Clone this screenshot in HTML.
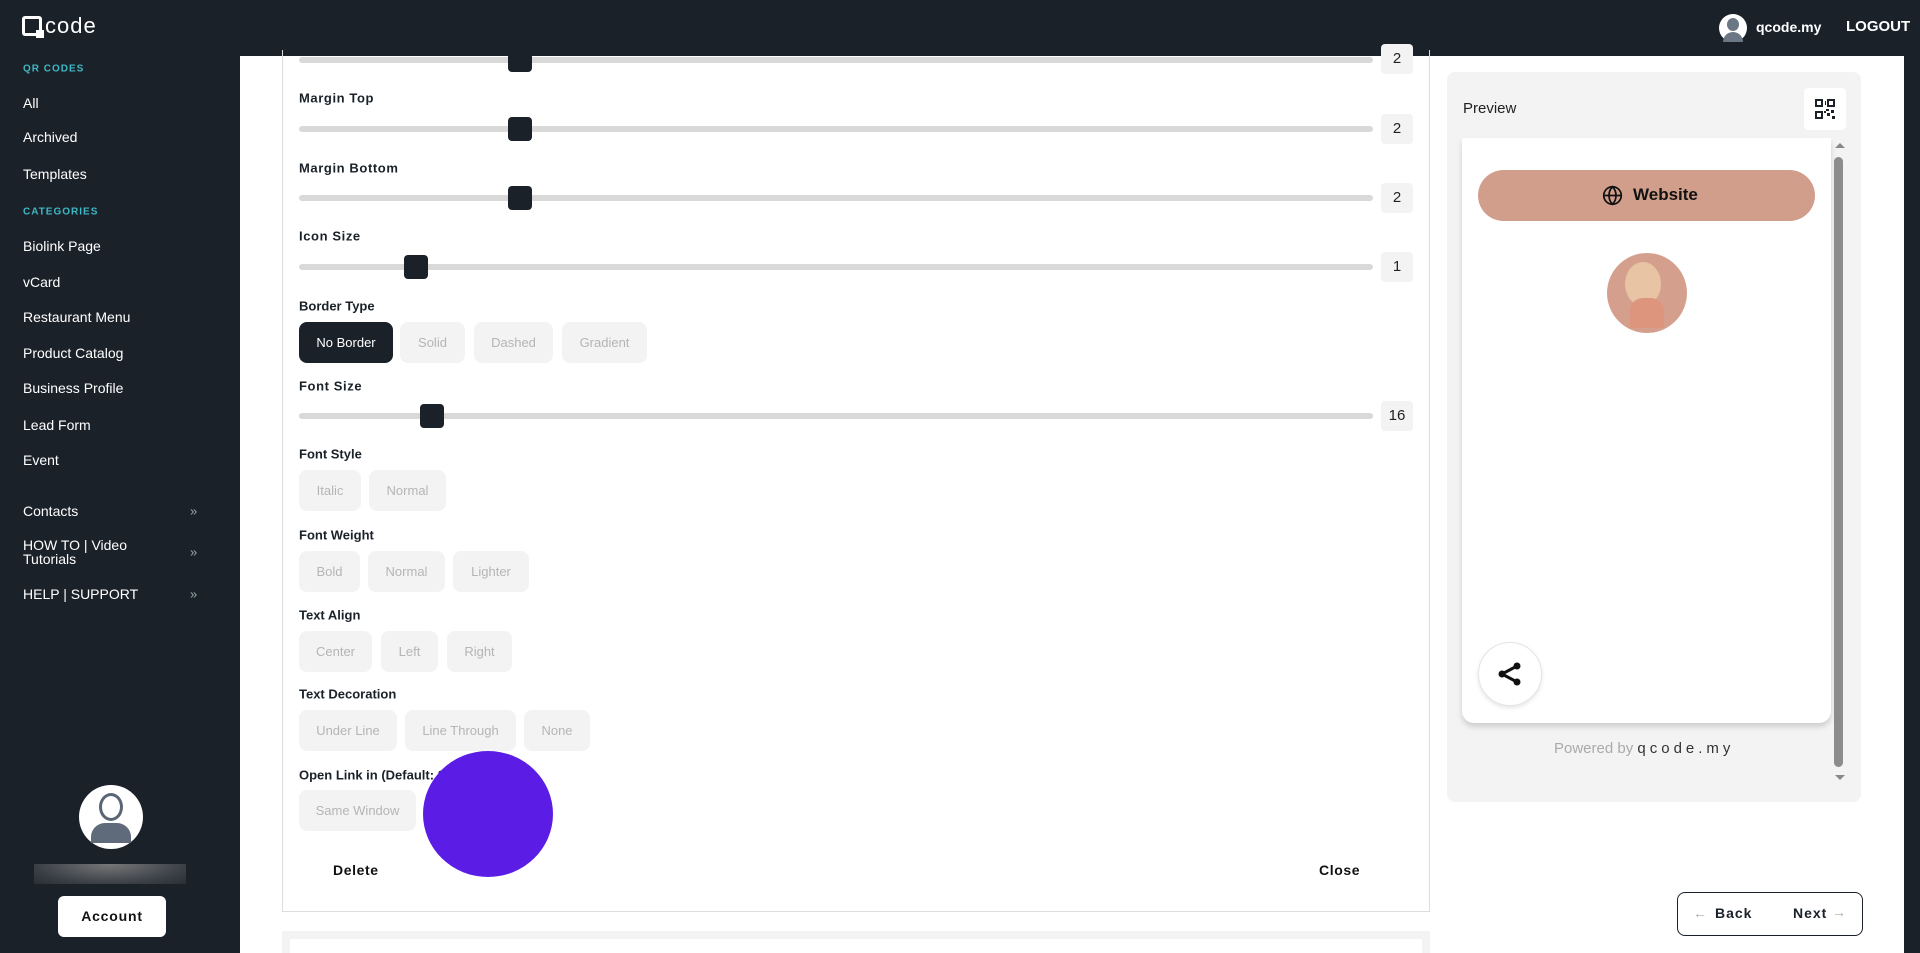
<!DOCTYPE html>
<html><head><meta charset="utf-8"><style>
*{margin:0;padding:0;box-sizing:border-box}
body{width:1920px;height:953px;overflow:hidden;background:#fff;font-family:"Liberation Sans",sans-serif;position:relative}
.a{position:absolute}
#hdr{left:0;top:0;width:1920px;height:56px;background:#1b2129}
#side{left:0;top:56px;width:240px;height:897px;background:#1b2129}
#rs{left:1904px;top:56px;width:16px;height:897px;background:#1b2129}
.nav{position:absolute;left:23px;color:#fff;font-size:14px;transform:translateY(-50%)}
.sec{position:absolute;left:23px;color:#3fb8c4;font-size:10px;font-weight:bold;letter-spacing:1px;transform:translateY(-50%)}
.chev{position:absolute;left:190px;color:#9aa;font-size:13px;transform:translateY(-50%)}
.lbl{position:absolute;left:299px;font-size:13px;font-weight:bold;color:#1b2129;letter-spacing:.6px;transform:translateY(-50%)}
.trk{position:absolute;left:299px;width:1074px;height:6px;border-radius:3px;background:#d9d9d9}
.th{position:absolute;width:24px;height:24px;border-radius:4px;background:#1b2129}
.val{position:absolute;left:1381px;width:32px;height:30px;background:#f3f3f3;border-radius:4px;font-size:15px;color:#222;text-align:center;line-height:30px}
.btn{position:absolute;height:41px;border-radius:8px;background:#f3f3f3;color:#b5b5b5;font-size:13px;text-align:center;line-height:41px}
</style></head><body>
<div class="a" id="hdr"></div>
<div class="a" id="side"></div>
<div class="a" id="rs"></div>
<div class="a" style="left:22px;top:16px;width:20px;height:20px;border:3px solid #fff;border-radius:3px"></div>
<div class="a" style="left:36px;top:30px;width:8px;height:8px;background:#fff"></div>
<div class="a" style="left:45px;top:13px;color:#fff;font-size:22px;letter-spacing:1px">code</div>
<div class="a" style="left:1719px;top:14px;width:28px;height:28px;border-radius:50%;background:#fff"></div>
<div class="a" style="left:1727px;top:18px;width:12px;height:13px;border-radius:50%;background:#6b7785"></div>
<div class="a" style="left:1723px;top:32px;width:20px;height:10px;border-radius:10px 10px 0 0;background:#6b7785"></div>
<div class="a" style="left:1756px;top:19px;color:#fff;font-size:14px;font-weight:bold">qcode.my</div>
<div class="a" style="left:1846px;top:18px;color:#fff;font-size:15px;font-weight:bold">LOGOUT</div>
<div class="sec" style="top:69px">QR CODES</div>
<div class="nav" style="top:103px">All</div>
<div class="nav" style="top:137px">Archived</div>
<div class="nav" style="top:174px">Templates</div>
<div class="sec" style="top:212px">CATEGORIES</div>
<div class="nav" style="top:246px">Biolink Page</div>
<div class="nav" style="top:282px">vCard</div>
<div class="nav" style="top:317px">Restaurant Menu</div>
<div class="nav" style="top:353px">Product Catalog</div>
<div class="nav" style="top:388px">Business Profile</div>
<div class="nav" style="top:425px">Lead Form</div>
<div class="nav" style="top:460px">Event</div>
<div class="nav" style="top:511px">Contacts</div><div class="chev" style="top:511px">»</div>
<div class="nav" style="top:552px;line-height:14px">HOW TO | Video<br>Tutorials</div><div class="chev" style="top:552px">»</div>
<div class="nav" style="top:594px">HELP | SUPPORT</div><div class="chev" style="top:594px">»</div>
<div class="a" style="left:79px;top:785px;width:64px;height:64px;border-radius:50%;background:#fff"></div>
<div class="a" style="left:99px;top:793px;width:24px;height:28px;border-radius:50%;border:3px solid #5a6675;background:#fff"></div>
<div class="a" style="left:91px;top:823px;width:40px;height:20px;border-radius:14px 14px 0 0;background:#5f6b7a"></div>
<div class="a" style="left:34px;top:864px;width:152px;height:20px;background:radial-gradient(ellipse at 50% 0,#777 0%,#3a3f46 70%,#2a2f36 100%)"></div>
<div class="a" style="left:58px;top:896px;width:108px;height:41px;border-radius:6px;background:#fff;text-align:center;line-height:41px;font-size:14px;font-weight:bold;letter-spacing:.8px;color:#111">Account</div>
<div class="a" style="left:282px;top:50px;width:1148px;height:862px;border:1px solid #ddd;border-top:none"></div>
<div class="a" style="left:282px;top:931px;width:1148px;height:22px;background:#f3f3f3"></div>
<div class="a" style="left:290px;top:939px;width:1132px;height:14px;background:#fff"></div>
<div class="trk" style="top:57px"></div><div class="th" style="left:508px;top:48px"></div><div class="val" style="top:44px">2</div>
<div class="lbl" style="top:98px">Margin Top</div>
<div class="trk" style="top:126px"></div><div class="th" style="left:508px;top:117px"></div><div class="val" style="top:114px">2</div>
<div class="lbl" style="top:168px">Margin Bottom</div>
<div class="trk" style="top:195px"></div><div class="th" style="left:508px;top:186px"></div><div class="val" style="top:183px">2</div>
<div class="lbl" style="top:236px">Icon Size</div>
<div class="trk" style="top:264px"></div><div class="th" style="left:404px;top:255px"></div><div class="val" style="top:252px">1</div>
<div class="lbl" style="top:306px;letter-spacing:0">Border Type</div>
<div class="btn" style="left:299px;top:322px;width:94px;background:#1b2129;color:#fff">No Border</div>
<div class="btn" style="left:400px;top:322px;width:65px">Solid</div>
<div class="btn" style="left:474px;top:322px;width:79px">Dashed</div>
<div class="btn" style="left:562px;top:322px;width:85px">Gradient</div>
<div class="lbl" style="top:386px">Font Size</div>
<div class="trk" style="top:413px"></div><div class="th" style="left:420px;top:404px"></div><div class="val" style="top:401px">16</div>
<div class="lbl" style="top:454px;letter-spacing:0">Font Style</div>
<div class="btn" style="left:299px;top:470px;width:62px">Italic</div>
<div class="btn" style="left:369px;top:470px;width:77px">Normal</div>
<div class="lbl" style="top:535px;letter-spacing:0">Font Weight</div>
<div class="btn" style="left:299px;top:551px;width:61px">Bold</div>
<div class="btn" style="left:368px;top:551px;width:77px">Normal</div>
<div class="btn" style="left:453px;top:551px;width:76px">Lighter</div>
<div class="lbl" style="top:615px;letter-spacing:0">Text Align</div>
<div class="btn" style="left:299px;top:631px;width:73px">Center</div>
<div class="btn" style="left:381px;top:631px;width:57px">Left</div>
<div class="btn" style="left:447px;top:631px;width:65px">Right</div>
<div class="lbl" style="top:694px;letter-spacing:0">Text Decoration</div>
<div class="btn" style="left:299px;top:710px;width:98px">Under Line</div>
<div class="btn" style="left:405px;top:710px;width:111px">Line Through</div>
<div class="btn" style="left:524px;top:710px;width:66px">None</div>
<div class="lbl" style="top:775px;letter-spacing:0">Open Link in (Default: Same Window)</div>
<div class="btn" style="left:299px;top:790px;width:117px">Same Window</div>
<div class="btn" style="left:425px;top:790px;width:114px">New Tab</div>
<div class="a" style="left:423px;top:751px;width:130px;height:126px;border-radius:50%;background:#5b1de6"></div>
<div class="a" style="left:333px;top:862px;font-size:14px;font-weight:bold;letter-spacing:.6px;color:#111">Delete</div>
<div class="a" style="left:1319px;top:862px;font-size:14px;font-weight:bold;letter-spacing:.6px;color:#111">Close</div>
<div class="a" style="left:1447px;top:72px;width:414px;height:730px;background:#f3f3f3;border-radius:8px"></div>
<div class="a" style="left:1463px;top:100px;font-size:15px;color:#222">Preview</div>
<div class="a" style="left:1804px;top:88px;width:42px;height:42px;background:#fff;border-radius:4px"></div>
<svg class="a" style="left:1815px;top:99px" width="20" height="20" viewBox="0 0 20 20" fill="#1b2129"><path d="M0 0h8v8H0zM2 2v4h4V2zM12 0h8v8h-8zM14 2v4h4V2zM0 12h8v8H0zM2 14v4h4v-4zM10 2h1v4h-1zM11 10h3v2h-3zM16 11h3v3h-3zM12 14h3v3h-3zM17 17h3v3h-3zM9 12h2v2H9z"/></svg>
<div class="a" style="left:1462px;top:138px;width:369px;height:585px;background:#fff;border-radius:0 0 12px 12px;box-shadow:0 4px 6px rgba(0,0,0,.15)"></div>
<div class="a" style="left:1835px;top:143px;width:0;height:0;border:5px solid transparent;border-bottom-color:#888;border-top:none"></div>
<div class="a" style="left:1834px;top:157px;width:9px;height:610px;border-radius:5px;background:#8c8c8c"></div>
<div class="a" style="left:1835px;top:775px;width:0;height:0;border:5px solid transparent;border-top-color:#888;border-bottom:none"></div>
<div class="a" style="left:1478px;top:170px;width:337px;height:51px;border-radius:26px;background:#d19e8c"></div>
<svg class="a" style="left:1602px;top:185px" width="21" height="21" viewBox="0 0 24 24" fill="none" stroke="#111" stroke-width="2"><circle cx="12" cy="12" r="10"/><path d="M2 12h20M12 2c3 3 4 6 4 10s-1 7-4 10c-3-3-4-6-4-10s1-7 4-10z"/></svg>
<div class="a" style="left:1633px;top:185px;font-size:17px;font-weight:bold;color:#111">Website</div>
<div class="a" style="left:1607px;top:253px;width:80px;height:80px;border-radius:50%;background:#d4a08d"></div>
<div class="a" style="left:1625px;top:262px;width:36px;height:44px;border-radius:50%;background:#e8c3a4"></div>
<div class="a" style="left:1630px;top:298px;width:34px;height:30px;border-radius:40% 40% 0 0;background:#dd957e"></div>
<div class="a" style="left:1478px;top:642px;width:64px;height:64px;border-radius:50%;background:#fff;border:1px solid #e5e5e5;box-shadow:0 2px 4px rgba(0,0,0,.1)"></div>
<svg class="a" style="left:1497px;top:661px" width="26" height="26" viewBox="0 0 26 26"><g fill="#111"><circle cx="20" cy="5" r="3.5"/><circle cx="5" cy="13" r="3.5"/><circle cx="20" cy="21" r="3.5"/></g><path d="M20 5L5 13L20 21" stroke="#111" stroke-width="3" fill="none"/></svg>
<div class="a" style="left:1554px;top:740px;font-size:15px;color:#aaa">Powered by <span style="color:#333;letter-spacing:4px">qcode.my</span></div>
<div class="a" style="left:1677px;top:892px;width:186px;height:44px;border:1.5px solid #1b2129;border-radius:8px"></div>
<div class="a" style="left:1693px;top:905px;font-size:14px;color:#aaa">←</div>
<div class="a" style="left:1715px;top:905px;font-size:14px;font-weight:bold;letter-spacing:1px;color:#1b2129">Back</div>
<div class="a" style="left:1793px;top:905px;font-size:14px;font-weight:bold;letter-spacing:1px;color:#1b2129">Next</div>
<div class="a" style="left:1832px;top:904px;font-size:14px;color:#aaa">→</div>
</body></html>
